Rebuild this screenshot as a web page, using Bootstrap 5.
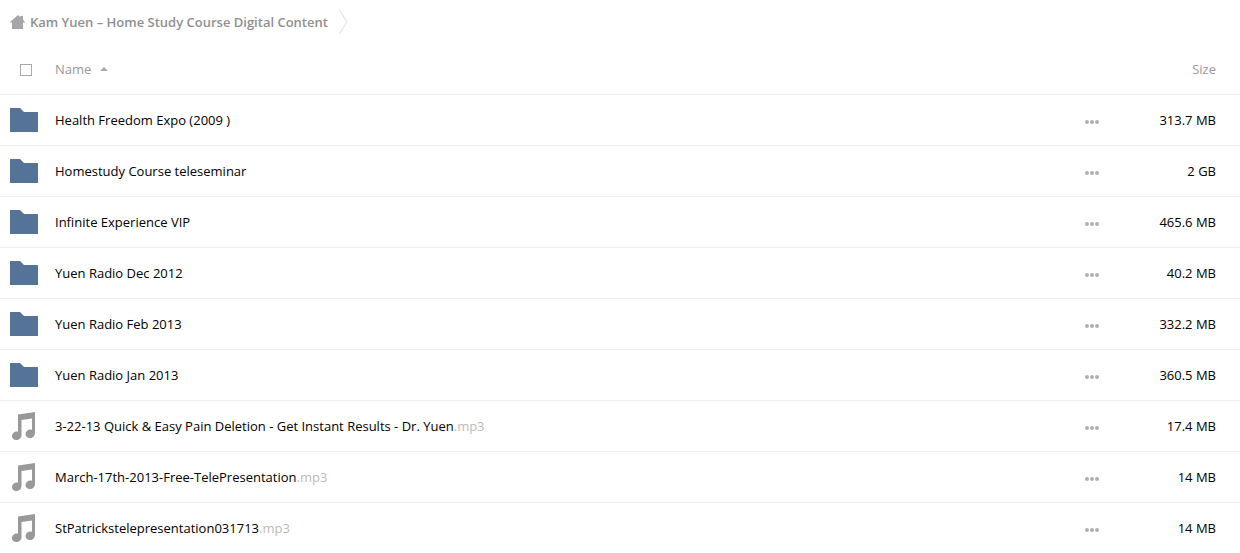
<!DOCTYPE html>
<html lang="en">
<head>
<meta charset="utf-8">
<meta name="viewport" content="width=device-width, initial-scale=1">
<title>Kam Yuen – Home Study Course Digital Content</title>
<link href="https://cdn.jsdelivr.net/npm/bootstrap@5.3.0/dist/css/bootstrap.min.css" rel="stylesheet">
<style>
body { font-family: "Open Sans", sans-serif; font-size: 13px; line-height: 20px; color: #000; }
a { color: inherit; text-decoration: none; }
svg { display: block; }
.crumbs { height: 44px; padding-left: 10px; color: #909090; font-weight: 600; }
.crumbs a { gap: 5px; }
.crumbs .chevron { margin-left: 11px; }
.files { table-layout: fixed; border-collapse: separate; border-spacing: 0; }
.files th, .files td { height: 51px; padding: 0; border-bottom: 1px solid #eee; vertical-align: middle; }
.files th { font-weight: 400; color: #999; }
.files tbody tr:last-child td { border-bottom: 0; height: 50px; }
.files .col-icon { width: 55px; }
.files .col-menu { width: 38px; }
.files .col-size { width: 117px; padding-right: 24px; text-align: right; }
.files .icon-cell { padding-left: 10px; }
.icon-box { width: 28px; }
.pick { appearance: none; width: 12px; height: 12px; margin: 1px 0 0 20px; border: 1px solid #aaa; background: #fff; display: block; }
.sort { gap: 9px; }
.more { padding: 8px 0; line-height: 1; }
.more svg { margin-top: 3px; }
.ext { color: #bbb; }
</style>
</head>
<body>
<svg class="d-none" aria-hidden="true">
<symbol id="folder" viewBox="0 0 28 24"><path fill="#557299" d="M0 .5Q0 0 .5 0H10L14 4H27.500Q28 4 28 4.500V23.500Q28 24 27.500 24H.5Q0 24 0 23.500Z"/></symbol>
<symbol id="music" viewBox="0 0 24 28"><path fill="#999" d="M6 2.500L23 0V20.500C23 24 20.800 26 18 26C15.500 26 13.600 24.300 13.600 22.200C13.600 19 16.500 17 20 17.700V6.500L9.500 8V23C9.500 26 7 28 4.200 28C1.800 28 0 26.500 0 24.300C0 21 3 19.200 6 19.700Z"/></symbol>
<symbol id="dots" viewBox="0 0 14 4"><g fill="#b0b0b0"><circle cx="2" cy="2" r="2"/><circle cx="7" cy="2" r="2"/><circle cx="12" cy="2" r="2"/></g></symbol>
</svg>

<nav class="crumbs d-flex align-items-center" aria-label="Breadcrumb">
  <a href="#" class="d-flex align-items-center">
    <svg width="15" height="14" viewBox="0 0 15 14" aria-hidden="true"><path fill="#a6a6a6" d="M8 0L10.500 2.200V1H13V4.500L15.500 7.500H13V14H2V7.500H0V7Z"/></svg>
    <span>Kam Yuen – Home Study Course Digital Content</span>
  </a>
  <svg class="chevron" width="9" height="24" viewBox="0 0 9 24" aria-hidden="true"><path fill="none" stroke="#ddd" d="M.5 0L8 12L.5 24"/></svg>
</nav>

<main>
<table class="files w-100">
  <thead>
    <tr>
      <th class="col-icon"><input type="checkbox" class="pick" aria-label="Select all"></th>
      <th scope="col"><a href="#" class="sort d-inline-flex align-items-center">Name<svg width="8" height="4" viewBox="0 0 8 4" aria-hidden="true"><path fill="#aaa" d="M0 4L4 0L8 4Z"/></svg></a></th>
      <th class="col-menu"></th>
      <th class="col-size" scope="col"><a href="#">Size</a></th>
    </tr>
  </thead>
  <tbody>
    <tr>
      <td class="icon-cell"><svg width="28" height="24" aria-hidden="true"><use href="#folder"/></svg></td>
      <td><a href="#">Health Freedom Expo (2009 )</a></td>
      <td><button type="button" class="more border-0 bg-transparent" aria-label="Actions"><svg width="14" height="4"><use href="#dots"/></svg></button></td>
      <td class="col-size">313.7 MB</td>
    </tr>
    <tr>
      <td class="icon-cell"><svg width="28" height="24" aria-hidden="true"><use href="#folder"/></svg></td>
      <td><a href="#">Homestudy Course teleseminar</a></td>
      <td><button type="button" class="more border-0 bg-transparent" aria-label="Actions"><svg width="14" height="4"><use href="#dots"/></svg></button></td>
      <td class="col-size">2 GB</td>
    </tr>
    <tr>
      <td class="icon-cell"><svg width="28" height="24" aria-hidden="true"><use href="#folder"/></svg></td>
      <td><a href="#">Infinite Experience VIP</a></td>
      <td><button type="button" class="more border-0 bg-transparent" aria-label="Actions"><svg width="14" height="4"><use href="#dots"/></svg></button></td>
      <td class="col-size">465.6 MB</td>
    </tr>
    <tr>
      <td class="icon-cell"><svg width="28" height="24" aria-hidden="true"><use href="#folder"/></svg></td>
      <td><a href="#">Yuen Radio Dec 2012</a></td>
      <td><button type="button" class="more border-0 bg-transparent" aria-label="Actions"><svg width="14" height="4"><use href="#dots"/></svg></button></td>
      <td class="col-size">40.2 MB</td>
    </tr>
    <tr>
      <td class="icon-cell"><svg width="28" height="24" aria-hidden="true"><use href="#folder"/></svg></td>
      <td><a href="#">Yuen Radio Feb 2013</a></td>
      <td><button type="button" class="more border-0 bg-transparent" aria-label="Actions"><svg width="14" height="4"><use href="#dots"/></svg></button></td>
      <td class="col-size">332.2 MB</td>
    </tr>
    <tr>
      <td class="icon-cell"><svg width="28" height="24" aria-hidden="true"><use href="#folder"/></svg></td>
      <td><a href="#">Yuen Radio Jan 2013</a></td>
      <td><button type="button" class="more border-0 bg-transparent" aria-label="Actions"><svg width="14" height="4"><use href="#dots"/></svg></button></td>
      <td class="col-size">360.5 MB</td>
    </tr>
    <tr>
      <td class="icon-cell"><div class="icon-box d-flex justify-content-center"><svg width="24" height="28" aria-hidden="true"><use href="#music"/></svg></div></td>
      <td><a href="#">3-22-13 Quick &amp; Easy Pain Deletion - Get Instant Results - Dr. Yuen<span class="ext">.mp3</span></a></td>
      <td><button type="button" class="more border-0 bg-transparent" aria-label="Actions"><svg width="14" height="4"><use href="#dots"/></svg></button></td>
      <td class="col-size">17.4 MB</td>
    </tr>
    <tr>
      <td class="icon-cell"><div class="icon-box d-flex justify-content-center"><svg width="24" height="28" aria-hidden="true"><use href="#music"/></svg></div></td>
      <td><a href="#">March-17th-2013-Free-TelePresentation<span class="ext">.mp3</span></a></td>
      <td><button type="button" class="more border-0 bg-transparent" aria-label="Actions"><svg width="14" height="4"><use href="#dots"/></svg></button></td>
      <td class="col-size">14 MB</td>
    </tr>
    <tr>
      <td class="icon-cell"><div class="icon-box d-flex justify-content-center"><svg width="24" height="28" aria-hidden="true"><use href="#music"/></svg></div></td>
      <td><a href="#">StPatrickstelepresentation031713<span class="ext">.mp3</span></a></td>
      <td><button type="button" class="more border-0 bg-transparent" aria-label="Actions"><svg width="14" height="4"><use href="#dots"/></svg></button></td>
      <td class="col-size">14 MB</td>
    </tr>
  </tbody>
</table>
</main>
<script src="https://cdn.jsdelivr.net/npm/bootstrap@5.3.0/dist/js/bootstrap.bundle.min.js"></script>
</body>
</html>
